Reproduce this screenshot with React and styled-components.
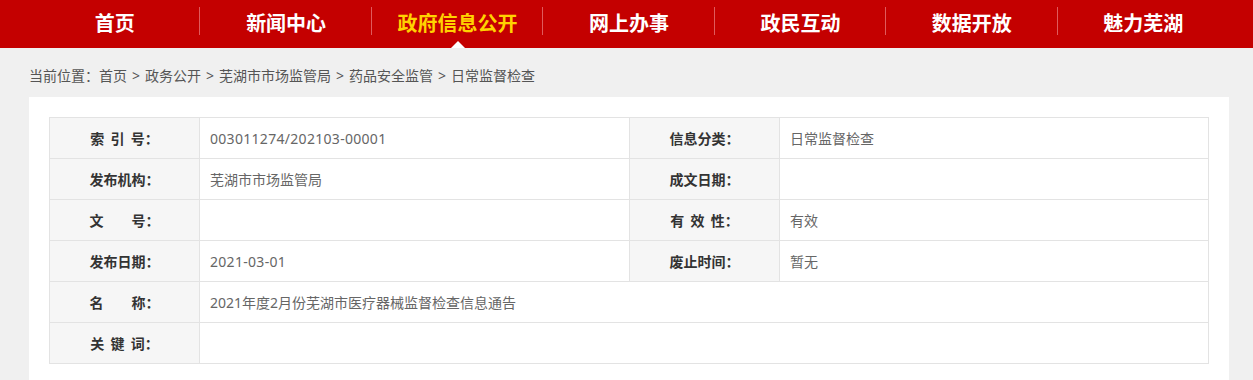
import React from "react";
import styled, { createGlobalStyle } from "styled-components";

const Global = createGlobalStyle`
  html, body { margin: 0; padding: 0; }
  body {
    background: #f0f0f0;
    font-family: "Noto Sans CJK SC", "Noto Sans", sans-serif;
    overflow: hidden;
  }
`;

const NavBar = styled.div`
  background: #c40000;
  height: 48px;
`;

const NavInner = styled.ul`
  list-style: none;
  margin: 0 0 0 29px;
  padding: 0;
  width: 1200px;
  display: flex;
  height: 48px;
`;

const NavItem = styled.li`
  position: relative;
  flex: 1;
  display: flex;
  align-items: center;
  justify-content: center;
  font-size: 20px;
  font-weight: bold;
  color: ${(p) => (p.$active ? "#ffd200" : "#ffffff")};
  padding-bottom: 4px;
  box-sizing: border-box;
  &:not(:last-child)::after {
    content: "";
    position: absolute;
    right: 0;
    top: 7px;
    height: 28px;
    width: 1px;
    background: #e05a5c;
  }
`;

const Triangle = styled.span`
  position: absolute;
  left: 50%;
  bottom: 0;
  margin-left: -7px;
  width: 0;
  height: 0;
  border-left: 7px solid transparent;
  border-right: 7px solid transparent;
  border-bottom: 7px solid #ffffff;
`;

const Crumbs = styled.div`
  margin-left: 29px;
  height: 49px;
  line-height: 20px;
  padding-top: 18px;
  box-sizing: border-box;
  font-size: 14px;
  color: #555;
  font-family: "Noto Sans", "Noto Sans CJK SC", sans-serif;
`;

const Sep = styled.span`
  margin: 0 5px;
`;

const Card = styled.div`
  margin-left: 29px;
  width: 1200px;
  background: #fff;
  padding: 20px;
  box-sizing: border-box;
`;

const Table = styled.table`
  width: 1160px;
  border-collapse: collapse;
  table-layout: fixed;
  font-size: 14px;
`;

const Label = styled.td`
  height: 40px;
  border: 1px solid #e3e3e3;
  background: #f6f6f6;
  color: #333;
  font-weight: bold;
  text-align: center;
  white-space: pre;
  word-spacing: 3px;
  padding: 0;
`;

const Value = styled.td`
  border: 1px solid #e3e3e3;
  color: #666;
  padding: 0 0 0 10px;
  height: 40px;
  font-family: "Noto Sans", "Noto Sans CJK SC", sans-serif;
`;

const Digits = styled.span`
  letter-spacing: 0.3px;
`;

const navs = ["首页", "新闻中心", "政府信息公开", "网上办事", "政民互动", "数据开放", "魅力芜湖"];
const crumbs = ["首页", "政务公开", "芜湖市市场监管局", "药品安全监管", "日常监督检查"];

export default function App() {
  return (
    <>
      <Global />
      <NavBar>
        <NavInner>
          {navs.map((n, i) => (
            <NavItem key={n} $active={i === 2}>
              {n}
              {i === 2 && <Triangle />}
            </NavItem>
          ))}
        </NavInner>
      </NavBar>
      <Crumbs>
        当前位置：
        {crumbs.map((c, i) => (
          <React.Fragment key={c}>
            {i > 0 && <Sep>&gt;</Sep>}
            {c}
          </React.Fragment>
        ))}
      </Crumbs>
      <Card>
        <Table>
          <colgroup>
            <col style={{ width: 150 }} />
            <col style={{ width: 430 }} />
            <col style={{ width: 150 }} />
            <col />
          </colgroup>
          <tbody>
            <tr>
              <Label>索 引 号：</Label>
              <Value><Digits>003011274/202103-00001</Digits></Value>
              <Label>信息分类：</Label>
              <Value>日常监督检查</Value>
            </tr>
            <tr>
              <Label>发布机构：</Label>
              <Value>芜湖市市场监管局</Value>
              <Label>成文日期：</Label>
              <Value></Value>
            </tr>
            <tr>
              <Label>文　　号：</Label>
              <Value></Value>
              <Label>有 效 性：</Label>
              <Value>有效</Value>
            </tr>
            <tr>
              <Label>发布日期：</Label>
              <Value><Digits>2021-03-01</Digits></Value>
              <Label>废止时间：</Label>
              <Value>暂无</Value>
            </tr>
            <tr>
              <Label>名　　称：</Label>
              <Value colSpan={3}>2021年度2月份芜湖市医疗器械监督检查信息通告</Value>
            </tr>
            <tr>
              <Label>关 键 词：</Label>
              <Value colSpan={3}></Value>
            </tr>
          </tbody>
        </Table>
      </Card>
    </>
  );
}
